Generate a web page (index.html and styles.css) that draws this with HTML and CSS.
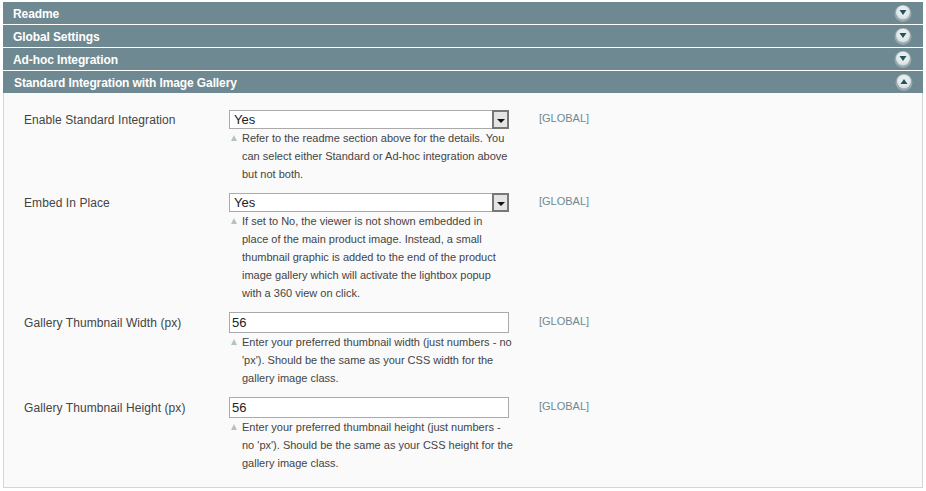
FILE: index.html
```html
<!DOCTYPE html>
<html lang="en">
<head>
    <meta charset="UTF-8">
    <meta name="viewport" content="width=device-width, initial-scale=1.0">
    <title>Configuration</title>
    <link rel="stylesheet" href="styles.css">
</head>
<body>
    <div class="config">
        <a href="#" class="section-head">Readme
            <svg class="toggle" viewBox="0 0 18 18"><use href="#toggle-down"/></svg>
        </a>
        <a href="#" class="section-head">Global Settings
            <svg class="toggle" viewBox="0 0 18 18"><use href="#toggle-down"/></svg>
        </a>
        <a href="#" class="section-head">Ad-hoc Integration
            <svg class="toggle" viewBox="0 0 18 18"><use href="#toggle-down"/></svg>
        </a>
        <a href="#" class="section-head section-head-open">Standard Integration with Image Gallery
            <svg class="toggle" viewBox="0 0 18 18"><use href="#toggle-up"/></svg>
        </a>

        <div class="section-body">
            <div class="row">
                <label class="row-label">Enable Standard Integration</label>
                <div class="row-value">
                    <div class="select-box">
                        <span>Yes</span>
                        <span class="select-btn"><i></i></span>
                    </div>
                    <p class="note">Refer to the readme section above for the details. You can select either Standard or Ad-hoc integration above but not both.</p>
                </div>
                <div class="row-scope">[GLOBAL]</div>
            </div>

            <div class="row">
                <label class="row-label">Embed In Place</label>
                <div class="row-value">
                    <div class="select-box">
                        <span>Yes</span>
                        <span class="select-btn"><i></i></span>
                    </div>
                    <p class="note">If set to No, the viewer is not shown embedded in<br>place of the main product image. Instead, a small<br>thumbnail graphic is added to the end of the product<br>image gallery which will activate the lightbox popup<br>with a 360 view on click.</p>
                </div>
                <div class="row-scope">[GLOBAL]</div>
            </div>

            <div class="row row-text">
                <label class="row-label">Gallery Thumbnail Width (px)</label>
                <div class="row-value">
                    <input class="text-input" type="text" value="56">
                    <p class="note">Enter your preferred thumbnail width (just numbers - no 'px'). Should be the same as your CSS width for the gallery image class.</p>
                </div>
                <div class="row-scope">[GLOBAL]</div>
            </div>

            <div class="row row-text">
                <label class="row-label">Gallery Thumbnail Height (px)</label>
                <div class="row-value">
                    <input class="text-input" type="text" value="56">
                    <p class="note">Enter your preferred thumbnail height (just numbers - no 'px'). Should be the same as your CSS height for the gallery image class.</p>
                </div>
                <div class="row-scope">[GLOBAL]</div>
            </div>
        </div>
    </div>

    <svg class="sprites" width="0" height="0">
        <defs>
            <radialGradient id="knob" cx="50%" cy="40%" r="65%">
                <stop offset="0%" stop-color="#eef2f2"/>
                <stop offset="65%" stop-color="#e2e8e9"/>
                <stop offset="100%" stop-color="#c3d0d3"/>
            </radialGradient>
            <g id="toggle-down">
                <circle cx="9" cy="9.5" r="8.5" fill="#96a9ae"/>
                <circle cx="9" cy="8.5" r="7" fill="url(#knob)"/>
                <path d="M5.5 6h7L9 11z" fill="#24505f"/>
            </g>
            <g id="toggle-up">
                <circle cx="9" cy="9.5" r="8.5" fill="#96a9ae"/>
                <circle cx="9" cy="8.5" r="7" fill="url(#knob)"/>
                <path d="M5.5 11h7L9 6z" fill="#24505f"/>
            </g>
        </defs>
    </svg>
</body>
</html>
```

FILE: styles.css
```css
* {
    margin: 0;
    padding: 0;
    box-sizing: border-box;
    font-family: "Liberation Sans", Arial, sans-serif;
}

body {
    background-color: #fff;
    color: #444;
    font-size: 12px;
    overflow: hidden;
}

.config {
    width: 920px;
    margin: 2px 0 0 3px;
}

.section-head {
    display: flex;
    justify-content: space-between;
    align-items: center;
    height: 22px;
    margin-bottom: 1px;
    padding: 1px 10px 0;
    background-color: #6f8992;
    color: #fff;
    font-size: 12px;
    font-weight: bold;
    letter-spacing: -0.1px;
    text-decoration: none;
}

.section-head-open {
    margin-bottom: 0;
    padding-left: 11px;
}

.toggle {
    width: 18px;
    height: 18px;
    margin: -1px 1px 0 0;
}

.section-head-open .toggle {
    margin-right: 0;
}

.section-body {
    height: 395px;
    padding: 17px 0 0 20px;
    background-color: #fafafa;
    border: 1px solid #d6d6d6;
    border-top: 0;
}

.row {
    display: flex;
    margin-bottom: 10px;
}

.row-label {
    width: 205px;
    padding-top: 2px;
    line-height: 16px;
    letter-spacing: 0.08px;
}

.row-value {
    width: 285px;
}

.row-scope {
    margin-left: 25px;
    padding-top: 1px;
    color: #6f8992;
    font-size: 11px;
    line-height: 14px;
}

.row-text .row-label {
    padding-top: 3px;
}

.row-text .row-scope {
    padding-top: 2px;
}

.select-box,
.text-input {
    display: flex;
    align-items: center;
    justify-content: space-between;
    width: 280px;
    background-color: #fff;
    border: 1px solid #aaa;
    color: #222;
    font-size: 13px;
}

.select-box {
    height: 19px;
    padding-left: 4px;
}

.text-input {
    height: 21px;
    padding-left: 2px;
}

.select-btn {
    display: flex;
    align-items: center;
    justify-content: center;
    width: 17px;
    height: 19px;
    margin-right: -1px;
    background-color: #e4e4e4;
    border: 2px solid #777;
}

.select-btn i {
    margin-top: 2px;
    border-top: 4px solid #111;
    border-left: 4px solid transparent;
    border-right: 4px solid transparent;
}

.note {
    position: relative;
    padding-left: 13px;
    font-size: 11px;
    line-height: 18px;
    color: #444;
}

.note::before {
    content: '';
    position: absolute;
    left: 2px;
    top: 6px;
    border-bottom: 6px solid #b4c2c6;
    border-left: 3.5px solid transparent;
    border-right: 3.5px solid transparent;
}

.sprites {
    position: absolute;
}
```
